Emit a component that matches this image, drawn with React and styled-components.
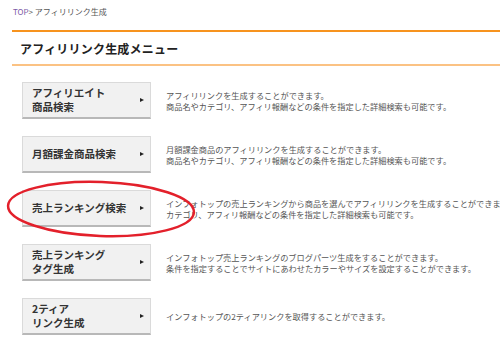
import React from "react";
import styled, { createGlobalStyle } from "styled-components";

const GlobalStyle = createGlobalStyle`
  body {
    margin: 0;
    background: #fff;
    font-family: "Noto Sans CJK JP", "Noto Sans", sans-serif;
    overflow: hidden;
  }
`;

const menus = [
  {
    label: ["アフィリエイト", "商品検索"],
    desc: [
      "アフィリリンクを生成することができます。",
      "商品名やカテゴリ、アフィリ報酬などの条件を指定した詳細検索も可能です。",
    ],
  },
  {
    label: ["月額課金商品検索"],
    desc: [
      "月額課金商品のアフィリリンクを生成することができます。",
      "商品名やカテゴリ、アフィリ報酬などの条件を指定した詳細検索も可能です。",
    ],
  },
  {
    label: ["売上ランキング検索"],
    desc: [
      "インフォトップの売上ランキングから商品を選んでアフィリリンクを生成することができます。",
      "カテゴリ、アフィリ報酬などの条件を指定した詳細検索も可能です。",
    ],
  },
  {
    label: ["売上ランキング", "タグ生成"],
    desc: [
      "インフォトップ売上ランキングのブログパーツ生成をすることができます。",
      "条件を指定することでサイトにあわせたカラーやサイズを設定することができます。",
    ],
  },
  {
    label: ["2ティア", "リンク生成"],
    desc: ["インフォトップの2ティアリンクを取得することができます。"],
  },
];

const App = () => {
  return (
    <Page>
      <GlobalStyle />
      <Breadcrumb>
        <a href="#top">TOP</a>
        <span>&gt; アフィリリンク生成</span>
      </Breadcrumb>
      <Header>
        <h1>アフィリリンク生成メニュー</h1>
      </Header>
      <MenuList>
        {menus.map((m, i) => (
          <Row key={i}>
            <MenuButton>
              <span>
                {m.label.map((l, j) => (
                  <div key={j}>{l}</div>
                ))}
              </span>
              <Arrow />
            </MenuButton>
            <Desc>
              {m.desc.map((d, j) => (
                <div key={j}>{d}</div>
              ))}
            </Desc>
          </Row>
        ))}
      </MenuList>
      <Marker width="500" height="341" viewBox="0 0 500 341">
        <ellipse
          cx="101"
          cy="209"
          rx="93"
          ry="27"
          transform="rotate(2 101 209)"
          fill="none"
          stroke="#e3202b"
          strokeWidth="2.5"
        />
      </Marker>
    </Page>
  );
};

const Page = styled.div`
  position: relative;
  width: 640px;
  height: 341px;
`;

const Breadcrumb = styled.div`
  box-sizing: border-box;
  height: 30px;
  padding: 6px 0 0 13px;
  font-size: 8px;
  line-height: 12px;
  color: #555;

  a {
    color: #7b5aa6;
    text-decoration: none;
  }
`;

const Header = styled.div`
  margin-left: 12px;
  height: 32px;
  border-top: 2px solid #f7931e;
  border-bottom: 2px solid #fbc283;
  display: flex;
  align-items: center;
  padding-left: 8px;

  h1 {
    margin: 0;
    font-size: 12px;
    font-weight: bold;
    letter-spacing: 0.2px;
    color: #222;
  }
`;

const MenuList = styled.div`
  display: flex;
  flex-direction: column;
  gap: 17px;
  padding: 16px 0 0 22px;
`;

const Row = styled.div`
  display: flex;
  align-items: center;
  gap: 15px;
`;

const MenuButton = styled.div`
  box-sizing: border-box;
  flex: none;
  width: 129px;
  height: 37px;
  display: flex;
  align-items: center;
  justify-content: space-between;
  padding: 0 6px 0 9px;
  background: #f1f1f1;
  border: 1px solid #dadada;
  border-bottom: 2px solid #b8b8b8;
  color: #333;
  font-size: 10.5px;
  font-weight: bold;
  line-height: 14px;
`;

const Arrow = styled.i`
  width: 0;
  height: 0;
  border-left: 4px solid #222;
  border-top: 2.5px solid transparent;
  border-bottom: 2.5px solid transparent;
`;

const Desc = styled.div`
  font-size: 8.2px;
  line-height: 11px;
  color: #555;
  white-space: nowrap;
`;

const Marker = styled.svg`
  position: absolute;
  left: 0;
  top: 0;
  pointer-events: none;
`;

export default App;
